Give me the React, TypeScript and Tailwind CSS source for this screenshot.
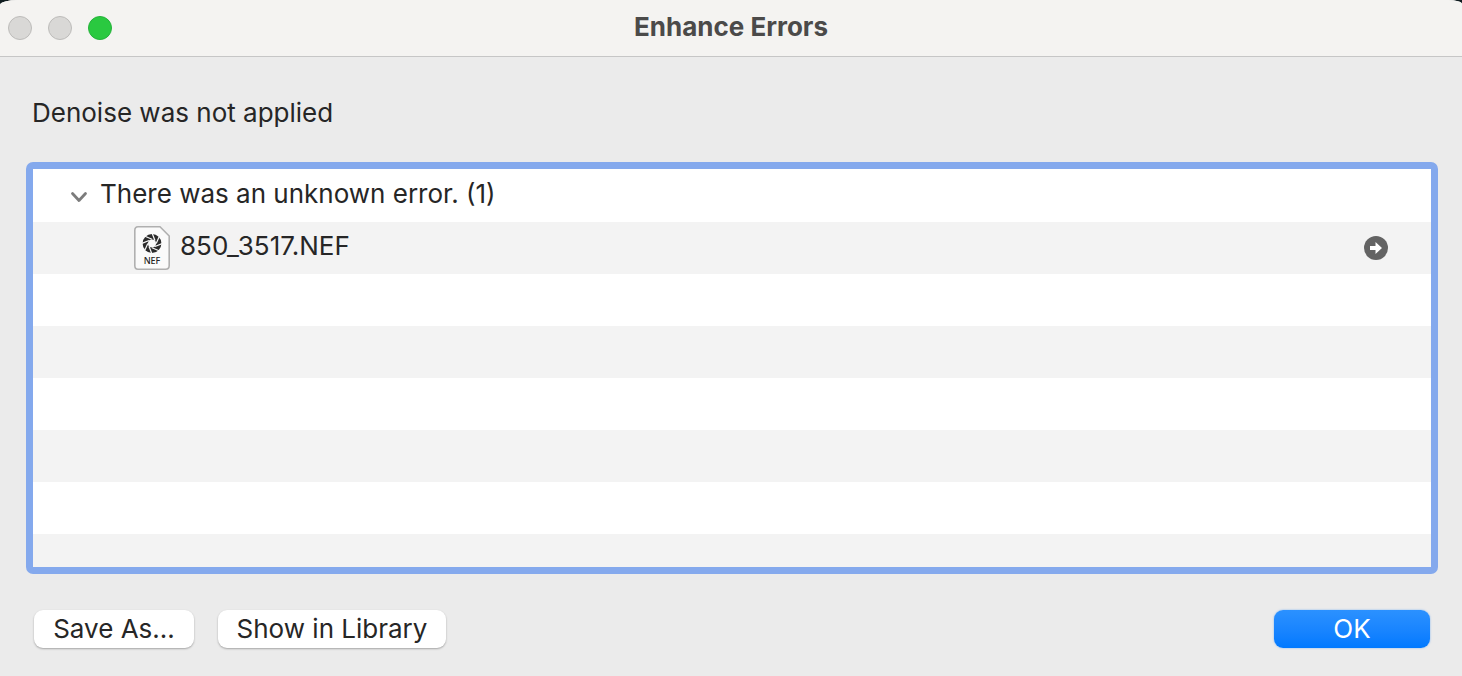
import React, { useState } from "react";

const emptyRows = [1, 2, 3, 4, 5, 6];
const bladeAngles = [0, 45, 90, 135, 180, 225, 270, 315];

const ChevronIcon: React.FC<{ open: boolean }> = ({ open }) => (
    <svg
        className={open ? "h-5 w-5" : "h-5 w-5 -rotate-90"}
        viewBox="0 0 20 20"
        fill="none"
        stroke="#7c7c7c"
        strokeWidth="2.8"
        strokeLinecap="round"
        strokeLinejoin="round"
    >
        <path d="M3.5 7.5 L10 14.5 L16.5 7.5" />
    </svg>
);

const NefFileIcon: React.FC = () => (
    <svg className="h-[46px] w-[38px] shrink-0" viewBox="0 0 38 46">
        <path
            d="M5 1.8 H27 L36.2 11 V40.5 Q36.2 44.2 32.5 44.2 H5 Q1.8 44.2 1.8 40.5 V5.5 Q1.8 1.8 5 1.8 Z"
            fill="#fafafa"
            stroke="#b0b0b0"
            strokeWidth="1.6"
        />
        <g transform="translate(19 18.5)">
            <circle r="9.4" fill="#2b2b2b" />
            <circle r="4" fill="#fafafa" />
            {bladeAngles.map((angle) => (
                <path
                    key={angle}
                    d="M4.2 0 L7.5 -7.6"
                    stroke="#fafafa"
                    strokeWidth="1.2"
                    transform={`rotate(${angle})`}
                />
            ))}
        </g>
        <text
            x="19"
            y="39"
            textAnchor="middle"
            className="fill-[#222222] font-['Noto_Sans',sans-serif] text-[9px] font-medium"
        >
            NEF
        </text>
    </svg>
);

const ArrowIcon: React.FC = () => (
    <svg className="h-6 w-6" viewBox="0 0 24 24">
        <circle cx="12" cy="12" r="12" fill="#636363" />
        <path d="M6 10 H11.5 V6 L18 12 L11.5 18 V14 H6 Z" fill="#ffffff" />
    </svg>
);

export default function App() {
    const [isOpen, setIsOpen] = useState(true);

    return (
        <div className="min-h-screen bg-[#101c20] font-[Inter,sans-serif] text-[#262626]">
            <div className="flex min-h-screen flex-col rounded-tl-[18px_5px] rounded-tr-[14px_4px] bg-[#ebebeb]">
                <header className="grid h-[57px] grid-cols-[1fr_auto_1fr] items-center rounded-tl-[18px_5px] rounded-tr-[14px_4px] border-b border-[#c6c6c6] bg-[#f4f3f1] px-2">
                    <div className="flex gap-4">
                        <button aria-label="Close" className="h-6 w-6 rounded-full border border-[#bdbcba] bg-[#d9d8d6]" />
                        <button aria-label="Minimize" className="h-6 w-6 rounded-full border border-[#bdbcba] bg-[#d9d8d6]" />
                        <button aria-label="Zoom" className="h-6 w-6 rounded-full border border-[#24b23a] bg-[#2ac940]" />
                    </div>
                    <h1 className="pb-0.5 text-[26px] leading-8 font-bold text-[#4b4a49]">Enhance Errors</h1>
                </header>

                <main className="pr-6 pl-[26px]">
                    <p className="px-[6px] pt-10 pb-[33px] text-[26px] leading-8">Denoise was not applied</p>

                    <div className="h-[412px] overflow-hidden rounded-[7px] border-7 border-[#84a9ed] bg-white pt-px">
                        <ul>
                            <li className="flex h-[52px] items-center pl-9">
                                <button
                                    aria-label="Toggle group"
                                    aria-expanded={isOpen}
                                    className="mr-[11px]"
                                    onClick={() => setIsOpen(!isOpen)}
                                >
                                    <ChevronIcon open={isOpen} />
                                </button>
                                <span className="pb-1 text-[26px] leading-8">There was an unknown error. (1)</span>
                            </li>
                            {isOpen && (
                                <li className="flex h-[52px] items-center bg-[#f3f3f3] pr-[43px] pl-[100px]">
                                    <NefFileIcon />
                                    <span className="flex-1 pb-1 pl-[9px] text-[26px] leading-8">850_3517.NEF</span>
                                    <button aria-label="Show photo">
                                        <ArrowIcon />
                                    </button>
                                </li>
                            )}
                            {emptyRows.map((row) => (
                                <li key={row} aria-hidden="true" className="h-[52px] even:bg-[#f3f3f3]" />
                            ))}
                        </ul>
                    </div>
                </main>

                <footer className="flex gap-6 pt-9 pr-8 pb-7 pl-[34px]">
                    <button className="h-[38px] w-40 rounded-[9px] bg-white pb-px text-[26px] leading-8 shadow-[0_1px_2px_rgba(0,0,0,0.3)]">
                        Save As...
                    </button>
                    <button className="h-[38px] w-[228px] rounded-[9px] bg-white pb-px text-[26px] leading-8 shadow-[0_1px_2px_rgba(0,0,0,0.3)]">
                        Show in Library
                    </button>
                    <button className="ml-auto h-[38px] w-[156px] rounded-[9px] bg-linear-to-b from-[#2b91ff] to-[#0079ff] pb-px text-[26px] leading-8 text-white shadow-[0_0_2px_rgba(0,121,255,0.5)]">
                        OK
                    </button>
                </footer>
            </div>
        </div>
    );
}
